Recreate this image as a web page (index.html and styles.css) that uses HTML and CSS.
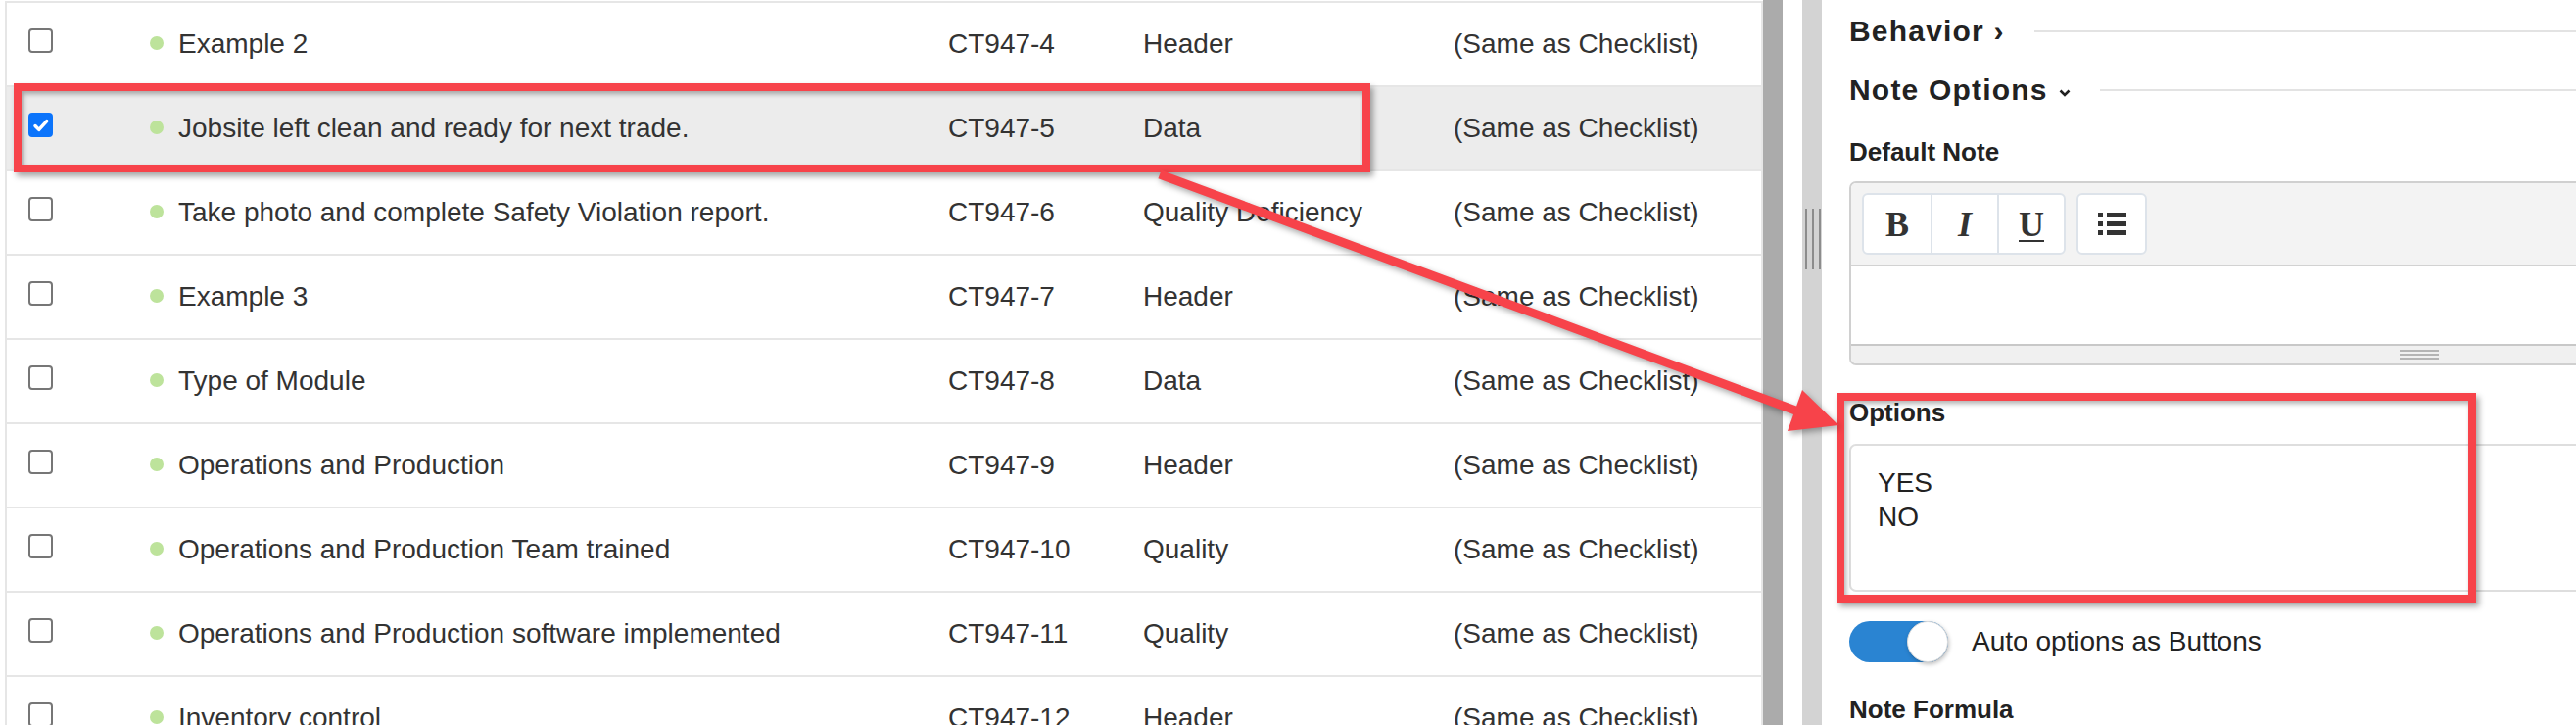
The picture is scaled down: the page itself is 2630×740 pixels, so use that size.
FILE: index.html
```html
<!DOCTYPE html>
<html lang="en">
<head>
    <meta charset="UTF-8">
    <title>Checklist items</title>
    <link rel="stylesheet" href="styles.css">
</head>
<body>
    <div class="page">
        <div class="list">
            <div class="row">
                <div class="cell-check"><span class="check"></span></div>
                <div class="cell-name"><span class="dot"></span>Example 2</div>
                <div>CT947-4</div>
                <div>Header</div>
                <div>(Same as Checklist)</div>
            </div>
            <div class="row selected">
                <div class="cell-check"><span class="check checked"><svg viewBox="0 0 16 16" width="20" height="20"><path d="M3.2 8.4l3 3.1 6.4-7" fill="none" stroke="#fff" stroke-width="2.8" stroke-linecap="round" stroke-linejoin="round"/></svg></span></div>
                <div class="cell-name"><span class="dot"></span>Jobsite left clean and ready for next trade.</div>
                <div>CT947-5</div>
                <div>Data</div>
                <div>(Same as Checklist)</div>
            </div>
            <div class="row">
                <div class="cell-check"><span class="check"></span></div>
                <div class="cell-name"><span class="dot"></span>Take photo and complete Safety Violation report.</div>
                <div>CT947-6</div>
                <div>Quality Deficiency</div>
                <div>(Same as Checklist)</div>
            </div>
            <div class="row">
                <div class="cell-check"><span class="check"></span></div>
                <div class="cell-name"><span class="dot"></span>Example 3</div>
                <div>CT947-7</div>
                <div>Header</div>
                <div>(Same as Checklist)</div>
            </div>
            <div class="row">
                <div class="cell-check"><span class="check"></span></div>
                <div class="cell-name"><span class="dot"></span>Type of Module</div>
                <div>CT947-8</div>
                <div>Data</div>
                <div>(Same as Checklist)</div>
            </div>
            <div class="row">
                <div class="cell-check"><span class="check"></span></div>
                <div class="cell-name"><span class="dot"></span>Operations and Production</div>
                <div>CT947-9</div>
                <div>Header</div>
                <div>(Same as Checklist)</div>
            </div>
            <div class="row">
                <div class="cell-check"><span class="check"></span></div>
                <div class="cell-name"><span class="dot"></span>Operations and Production Team trained</div>
                <div>CT947-10</div>
                <div>Quality</div>
                <div>(Same as Checklist)</div>
            </div>
            <div class="row">
                <div class="cell-check"><span class="check"></span></div>
                <div class="cell-name"><span class="dot"></span>Operations and Production software implemented</div>
                <div>CT947-11</div>
                <div>Quality</div>
                <div>(Same as Checklist)</div>
            </div>
            <div class="row">
                <div class="cell-check"><span class="check"></span></div>
                <div class="cell-name"><span class="dot"></span>Inventory control</div>
                <div>CT947-12</div>
                <div>Header</div>
                <div>(Same as Checklist)</div>
            </div>
        </div>

        <div class="splitter">
            <div class="bar-dark"></div>
            <div class="bar-gap"></div>
            <div class="bar-light">
                <div class="grip"><span></span><span></span><span></span></div>
            </div>
        </div>

        <div class="panel">
            <div class="section-head">
                <span class="section-title">Behavior ›</span>
                <span class="section-line"></span>
            </div>
            <div class="section-head">
                <span class="section-title">Note Options
                    <svg class="chev" viewBox="0 0 12 8" width="12" height="8"><path d="M1.5 1.5l4.5 4.5 4.5-4.5" fill="none" stroke="#222" stroke-width="2.6"/></svg>
                </span>
                <span class="section-line"></span>
            </div>

            <div class="field-label first">Default Note</div>
            <div class="editor">
                <div class="toolbar">
                    <div class="btn-group">
                        <span class="tool bold">B</span>
                        <span class="tool italic">I</span>
                        <span class="tool under">U</span>
                    </div>
                    <div class="btn-group">
                        <span class="tool">
                            <svg viewBox="0 0 29 23" width="29" height="23">
                                <rect x="0" y="0" width="5" height="5" fill="#333"/>
                                <rect x="9" y="0" width="20" height="5" fill="#333"/>
                                <rect x="0" y="9" width="5" height="5" fill="#333"/>
                                <rect x="9" y="9" width="20" height="5" fill="#333"/>
                                <rect x="0" y="18" width="5" height="5" fill="#333"/>
                                <rect x="9" y="18" width="20" height="5" fill="#333"/>
                            </svg>
                        </span>
                    </div>
                </div>
                <div class="editor-body"></div>
                <div class="statusbar"><span class="resize"></span></div>
            </div>

            <div class="field-label options-label">Options</div>
            <div class="options-box">
                <div>YES</div>
                <div>NO</div>
            </div>

            <div class="toggle-row">
                <span class="toggle"><span class="knob"></span></span>
                <span>Auto options as Buttons</span>
            </div>

            <div class="field-label formula-label">Note Formula</div>
        </div>
    </div>

    <!-- annotations -->
    <div class="mark mark-row"></div>
    <div class="mark mark-options"></div>
    <svg class="arrow" width="2630" height="740" viewBox="0 0 2630 740">
        <line x1="1184" y1="178" x2="1836" y2="420" stroke="#f7434a" stroke-width="9"/>
        <polygon points="1877,434 1825,440 1840,398" fill="#f7434a"/>
    </svg>
</body>
</html>
```

FILE: styles.css
```css
* {
    margin: 0;
    padding: 0;
    box-sizing: border-box;
}

body {
    width: 2630px;
    height: 740px;
    overflow: hidden;
    background: #fff;
    color: #333;
    font-family: 'Liberation Sans', Arial, sans-serif;
    font-size: 28px;
    position: relative;
}

.page {
    display: flex;
    height: 740px;
}

/* left list */
.list {
    width: 1800px;
    flex-shrink: 0;
    padding-left: 5px;
    padding-top: 1px;
}

.row {
    display: grid;
    grid-template-columns: 146px 815px 199px 317px 1fr;
    align-items: center;
    height: 86px;
    border-left: 2px solid #e6e6e6;
    border-right: 2px solid #e6e6e6;
    border-bottom: 2px solid #e6e6e6;
    white-space: nowrap;
}

.row:first-child {
    height: 88px;
    border-top: 2px solid #e6e6e6;
}

.row.selected {
    background: #ececec;
}

.cell-check {
    padding-left: 22px;
    display: flex;
}

.check {
    width: 25px;
    height: 25px;
    border: 2px solid #767676;
    border-radius: 4px;
    margin-top: -7px;
    display: flex;
    align-items: center;
    justify-content: center;
}

.check.checked {
    background: #0b74fb;
    border-color: #0b74fb;
}

.cell-name {
    display: flex;
    align-items: center;
}

.dot {
    width: 14px;
    height: 14px;
    border-radius: 50%;
    background: #bde39b;
    margin-right: 15px;
    margin-top: -3px;
}

/* splitter */
.splitter {
    display: flex;
    width: 60px;
    flex-shrink: 0;
}

.bar-dark {
    width: 20px;
    background: #ababab;
}

.bar-gap {
    width: 20px;
    background: #fff;
}

.bar-light {
    width: 20px;
    background: #d3d3d3;
    padding-top: 213px;
}

.grip {
    display: flex;
    gap: 5px;
    padding-left: 3px;
}

.grip span {
    width: 2px;
    height: 62px;
    background: #8c8c8c;
}

/* right panel */
.panel {
    flex: 1;
    overflow: hidden;
    padding: 2px 0 0 28px;
}

.section-head {
    display: flex;
    align-items: center;
    height: 60px;
}

.section-title {
    font-size: 30px;
    font-weight: bold;
    letter-spacing: 1.2px;
    color: #222;
    white-space: nowrap;
    display: flex;
    align-items: center;
}

.chev {
    margin-left: 11px;
    margin-top: 6px;
}

.section-line {
    flex: 1;
    height: 2px;
    background: #e3e3e3;
    margin-left: 30px;
}

.field-label {
    font-size: 26px;
    font-weight: bold;
    color: #222;
    line-height: 30px;
}

.field-label.first {
    margin-top: 18px;
}

.editor {
    width: 1164px;
    margin-top: 15px;
    border: 2px solid #d0d0d0;
    border-radius: 7px;
    overflow: hidden;
}

.toolbar {
    display: flex;
    gap: 11px;
    padding: 10px 11px;
    background: #f3f3f3;
    border-bottom: 2px solid #d2d2d2;
}

.btn-group {
    display: flex;
    background: #fff;
    border: 2px solid #dde3ea;
    border-radius: 6px;
}

.tool {
    width: 68px;
    height: 59px;
    display: flex;
    align-items: center;
    justify-content: center;
    font-family: 'Liberation Serif', 'Times New Roman', serif;
    font-size: 36px;
    font-weight: bold;
    color: #333;
}

.tool + .tool {
    border-left: 2px solid #dde3ea;
}

.tool.italic {
    font-style: italic;
}

.tool.under {
    text-decoration: underline;
    text-decoration-thickness: 2px;
    text-underline-offset: 4px;
}

.editor-body {
    height: 79px;
    background: #fff;
}

.statusbar {
    height: 20px;
    background: #f0f0f0;
    border-top: 2px solid #c8c8c8;
    display: flex;
    justify-content: center;
    align-items: center;
}

.resize {
    width: 40px;
    height: 10px;
    border-top: 2px solid #b4b4b4;
    border-bottom: 2px solid #b4b4b4;
    position: relative;
}

.resize::after {
    content: '';
    position: absolute;
    left: 0;
    right: 0;
    top: 2px;
    height: 2px;
    background: #b4b4b4;
}

.options-label {
    margin-top: 33px;
}

.options-box {
    width: 1164px;
    height: 151px;
    margin-top: 17px;
    border: 2px solid #dedede;
    border-radius: 7px;
    padding: 20px 27px;
    line-height: 35px;
    color: #222;
}

.toggle-row {
    display: flex;
    align-items: center;
    gap: 24px;
    margin-top: 30px;
    height: 42px;
    color: #222;
}

.toggle {
    width: 101px;
    height: 42px;
    border-radius: 21px;
    background: #2a84d2;
    display: flex;
    justify-content: flex-end;
}

.knob {
    width: 42px;
    height: 42px;
    border-radius: 50%;
    background: #fff;
    border: 1px solid #dcdcdc;
    box-shadow: 1px 2px 4px rgba(0, 0, 0, 0.25);
}

.formula-label {
    margin-top: 33px;
}

/* annotation overlay */
.mark {
    position: absolute;
    border: 8px solid #f7434a;
    box-shadow: 3px 4px 6px rgba(0, 0, 0, 0.35), inset 2px 3px 5px rgba(0, 0, 0, 0.3);
    pointer-events: none;
}

.mark-row {
    left: 14px;
    top: 85px;
    width: 1385px;
    height: 91px;
}

.mark-options {
    left: 1875px;
    top: 401px;
    width: 653px;
    height: 214px;
}

.arrow {
    position: absolute;
    left: 0;
    top: 0;
    pointer-events: none;
    filter: drop-shadow(2px 3px 3px rgba(0, 0, 0, 0.35));
}
```
